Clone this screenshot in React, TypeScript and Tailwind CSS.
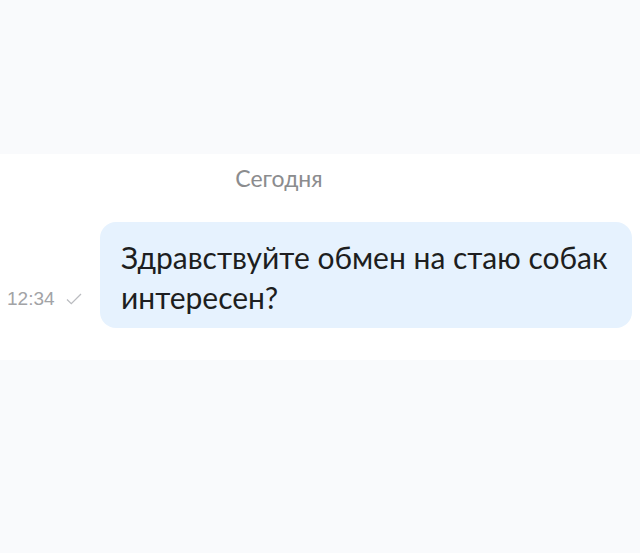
export default function App() {
  return (
    <div className="flex h-[553px] w-[640px] flex-col bg-[#f9fafc]">
      <div className="h-[154px]" />
      <div className="flex h-[206px] flex-col bg-white">
        <div className="pt-[12px] text-center font-['Lato','Noto_Sans',sans-serif] text-[23px] leading-[24px] text-[#8b8c8e]">
          <span className="relative -left-[41px]">Сегодня</span>
        </div>
        <div className="mt-[32px] flex items-end pr-[8px]">
          <div className="mb-[19px] flex h-[20px] w-[100px] items-center gap-[11px] pl-[7px] font-['Liberation_Sans',Arial,sans-serif] text-[19px] leading-[20px] text-[#a2a3a6]">
            <span>12:34</span>
            <svg width="16" height="12" viewBox="0 0 16 12" fill="none">
              <path d="M1 6.5 L5.3 10.6 L15 1" stroke="#babcc0" strokeWidth="1.3" />
            </svg>
          </div>
          <div className="flex-1 rounded-[16px] bg-[#e6f2fe] pl-[21px] pr-[16px] pt-[15px] pb-[11px] font-['Lato','Noto_Sans',sans-serif] text-[30px] leading-[40px] text-[#1d1e20]">
            Здравствуйте обмен на стаю собак
            <br />
            интересен?
          </div>
        </div>
      </div>
    </div>
  );
}
